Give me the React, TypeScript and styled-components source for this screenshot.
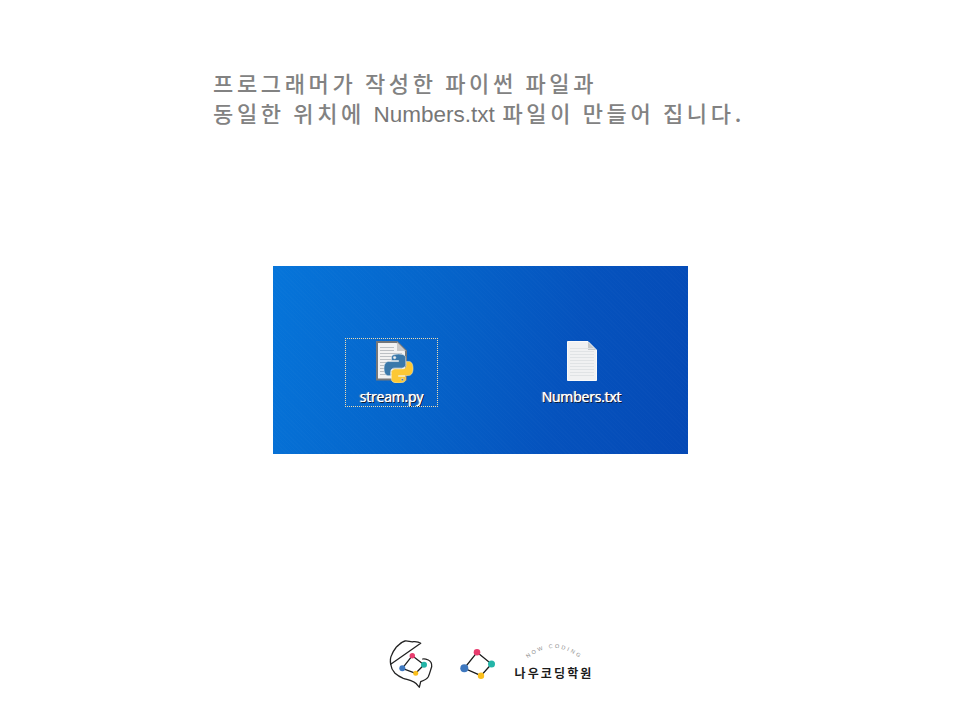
import React from "react";
import styled, { createGlobalStyle } from "styled-components";

const Global = createGlobalStyle`
  html, body { margin: 0; padding: 0; background: #fff; }
  body { width: 960px; height: 720px; overflow: hidden; }
`;

const Page = styled.div`
  width: 960px;
  height: 720px;
  display: flex;
  flex-direction: column;
  align-items: flex-start;
  box-sizing: border-box;
  padding-top: 68px;
`;

const Headline = styled.div`
  margin-left: 213px;
  font-family: "Noto Sans CJK KR", "Liberation Sans", sans-serif;
  font-size: 22px;
  line-height: 29.5px;
  color: #828282;
  letter-spacing: 3.65px;
  white-space: nowrap;
  font-weight: 500;
`;

const Latin = styled.span`
  font-family: "Liberation Sans", sans-serif;
  font-size: 22.5px;
  line-height: 1;
  letter-spacing: 0;
  font-weight: 400;
  color: #777;
  margin-right: -1px;
`;

const Desktop = styled.div`
  margin: 139px 0 0 273px;
  width: 415px;
  height: 188px;
  box-sizing: border-box;
  padding: 72px 0 0 72px;
  display: flex;
  align-items: flex-start;
  gap: 97px;
  background:
    repeating-linear-gradient(45deg, rgba(255, 255, 255, 0.01) 0 1px, transparent 1px 3px),
    linear-gradient(105deg, #0675da 0%, #0565cb 35%, #0552bd 70%, #0549b5 100%);
`;

const FileItem = styled.div<{ $selected?: boolean }>`
  width: 93px;
  height: 69px;
  box-sizing: border-box;
  display: flex;
  flex-direction: column;
  align-items: center;
  padding-top: 3px;
  outline: ${(p) => (p.$selected ? "1px dotted #f0dcae" : "none")};
  outline-offset: -1px;
`;

const FileName = styled.span<{ $tight?: boolean }>`
  margin-top: ${(p) => (p.$tight ? "5px" : "6px")};
  font-family: "Open Sans", "Liberation Sans", sans-serif;
  font-size: 14px;
  line-height: 18px;
  letter-spacing: -0.2px;
  color: #fff;
  text-shadow: 0 0 0.6px #fff, 1px 1px 0 #0b1a33, -1px 0 1px rgba(255, 190, 110, 0.6);
`;

const Footer = styled.div`
  margin: 186px 0 0 389px;
  display: flex;
  align-items: flex-start;
`;

const GraphMark = styled.svg`
  margin: 8px 0 0 25px;
`;

const NameBlock = styled.div`
  margin-left: 18px;
  width: 80px;
  display: flex;
  flex-direction: column;
  align-items: center;
`;

const ArcLabel = styled.svg`
  display: block;
  overflow: visible;
  font-family: "Liberation Sans", sans-serif;
  font-size: 5.5px;
  letter-spacing: 2.1px;
  fill: #8c8c8c;
`;

const Academy = styled.span`
  font-family: "Noto Sans CJK KR", sans-serif;
  font-size: 12px;
  line-height: 16px;
  font-weight: 700;
  letter-spacing: 2.1px;
  color: #1b1b1b;
  white-space: nowrap;
`;

const SNAKE =
  "M54.900 0c-28 0-26.300 12.200-26.300 12.200l0 12.600h26.700v3.800H18S0 26.500 0 54.800c0 28.200 15.700 27.200 15.700 27.200h9.400V68.900s-.5-15.700 15.400-15.700h26.600s14.900.2 14.900-14.400V14.600S84.300 0 54.900 0zM40.200 8.500c2.700 0 4.800 2.200 4.800 4.800 0 2.700-2.200 4.800-4.800 4.800-2.700 0-4.800-2.200-4.800-4.800 0-2.700 2.200-4.800 4.800-4.800z";

const PyFile = () => (
  <svg width="47" height="42" viewBox="0 0 47 42">
    <path d="M9 1H29L38 10V38.500H9Z" fill="#f2f2f2" stroke="#74777a" strokeWidth="2" />
    <path d="M29 1V10H38Z" fill="#c9c9c9" />
    {[6, 9, 12, 15, 18, 21, 24, 27, 30, 33].map((y) => (
      <rect key={y} x="12" y={y} width={y < 11 ? 14 : 22} height="1" fill="#bcc0c4" />
    ))}
    <g transform="translate(16 13) scale(0.264)" fillRule="evenodd">
      <path d={SNAKE} fill="#3a78aa" stroke="#e6eef2" strokeWidth="2" />
      <path d={SNAKE} transform="rotate(180 55 55)" fill="#fcc835" stroke="#f7edc0" strokeWidth="2" />
    </g>
  </svg>
);

const TxtFile = () => (
  <svg width="30" height="41" viewBox="0 0 30 41">
    <path d="M0.500 0.500H21L29.500 9V39.500H0.500Z" fill="#f0f1f2" stroke="#fafafa" strokeWidth="1" />
    <path d="M21 1V9H29Z" fill="#c6cacc" />
    {[7, 10, 13, 16, 19, 22, 25, 28, 31, 34].map((y) => (
      <rect key={y} x="3" y={y} width="24" height="1" fill="#e0e3e5" />
    ))}
  </svg>
);

const BrainMark = () => (
  <svg width="46" height="50" viewBox="0 0 46 50">
    <g fill="none" stroke="#222" strokeWidth="1.300" strokeLinejoin="round" strokeLinecap="round">
      <path d="M1.700 24.300C1 20 1.500 17 2.700 15C4 11 6 9 7.700 6.700C11 4 13 1.500 16 1C19 0.500 22 2.500 24.300 1.700C27 1.500 30 2 31.700 3.300Z" />
      <path d="M1.700 24.300C2 28 4 31 6 33.300C9 36 11 37 14.300 38.300C18 39.500 22 40 24.300 41.700C27 43 29 45 30.300 47.300L31.700 41.700C35 40.500 38 39 39.300 36.700C41 33 41.500 30 42.700 26.700C43 23 41.500 21 39.300 20C37 19 35 18.500 33.700 19" />
      <path d="M23.300 15.700L35 24.700L26.700 33.300L13.300 28.300Z" />
    </g>
    <circle cx="23.300" cy="15.700" r="2.700" fill="#e83c6e" />
    <circle cx="35" cy="24.700" r="3" fill="#23b5a8" />
    <circle cx="26.700" cy="33.300" r="2.500" fill="#fbbf1c" />
    <circle cx="13.300" cy="28.300" r="3" fill="#3e78bf" />
  </svg>
);

export default function App() {
  return (
    <Page>
      <Global />
      <Headline>
        프로그래머가 작성한 파이썬 파일과
        <br />
        동일한 위치에 <Latin>Numbers.txt</Latin> 파일이 만들어 집니다.
      </Headline>
      <Desktop>
        <FileItem $selected>
          <PyFile />
          <FileName $tight>stream.py</FileName>
        </FileItem>
        <FileItem>
          <TxtFile />
          <FileName>Numbers.txt</FileName>
        </FileItem>
      </Desktop>
      <Footer>
        <BrainMark />
        <GraphMark width="36" height="32" viewBox="0 0 36 32">
          <path d="M17 4.300L31.500 16L21 27.700L4.300 20.300Z" fill="none" stroke="#1a1a1a" strokeWidth="1.300" />
          <circle cx="17" cy="4.300" r="3.300" fill="#e83c6e" />
          <circle cx="31.500" cy="16" r="3.500" fill="#23b5a8" />
          <circle cx="21" cy="27.700" r="3.200" fill="#fbbf1c" />
          <circle cx="4.300" cy="20.300" r="4" fill="#3e78bf" />
        </GraphMark>
        <NameBlock>
          <ArcLabel width="80" height="25" viewBox="0 0 80 25">
            <defs>
              <path id="arc" d="M13 19Q40 -3.500 68 20" />
            </defs>
            <text>
              <textPath href="#arc" startOffset="1">NOW CODING</textPath>
            </text>
          </ArcLabel>
          <Academy>나우코딩학원</Academy>
        </NameBlock>
      </Footer>
    </Page>
  );
}
